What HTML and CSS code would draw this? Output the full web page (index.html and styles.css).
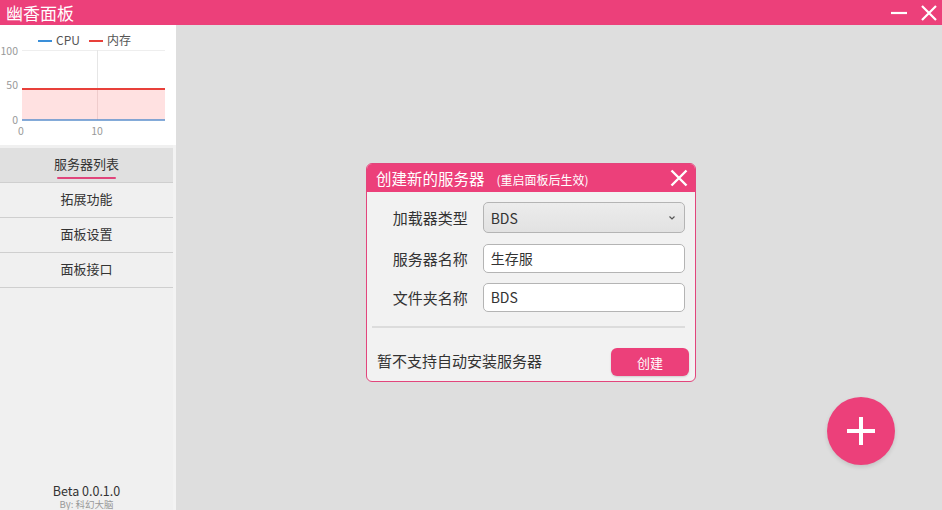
FILE: index.html
```html
<!DOCTYPE html>
<html lang="zh-CN">
<head>
<meta charset="utf-8">
<title>幽香面板</title>
<link rel="stylesheet" href="styles.css">
</head>
<body>
<div class="app">
  <header class="titlebar">
    <div class="app-title">幽香面板</div>
    <div class="win-controls">
      <svg class="win-btn" width="20" height="20" viewBox="0 0 20 20"><line x1="2" y1="10" x2="18" y2="10" stroke="#fff" stroke-width="2.2"/></svg>
      <svg class="win-btn" width="20" height="20" viewBox="0 0 20 20"><path d="M3 3 L17 17 M17 3 L3 17" stroke="#fff" stroke-width="2.2"/></svg>
    </div>
  </header>
  <div class="body-row">
    <aside class="sidebar">
      <div class="chart">
        <svg width="176" height="120" viewBox="0 0 176 120">
          <g font-family="Noto Sans CJK SC, sans-serif" font-size="12">
            <line x1="38" y1="16" x2="52" y2="16" stroke="#3a8fd9" stroke-width="2"/>
            <text x="56" y="20" fill="#555">CPU</text>
            <line x1="89" y1="16" x2="103" y2="16" stroke="#e8403a" stroke-width="2"/>
            <text x="107" y="20" fill="#555">内存</text>
          </g>
          <line x1="22" y1="25.5" x2="165" y2="25.5" stroke="#eee" stroke-width="1"/>
          <line x1="97.5" y1="25" x2="97.5" y2="95" stroke="#e6e6e6" stroke-width="1"/>
          <rect x="22" y="64" width="143" height="31" fill="#ffe1e1"/>
          <line x1="97.5" y1="64" x2="97.5" y2="95" stroke="#efcccc" stroke-width="1"/>
          <line x1="22" y1="64" x2="165" y2="64" stroke="#e8403a" stroke-width="2"/>
          <line x1="22" y1="95" x2="165" y2="95" stroke="#5b8fcc" stroke-width="1.3"/>
          <g font-family="Noto Sans CJK SC, sans-serif" font-size="10.5" fill="#999">
            <text x="18" y="30" text-anchor="end">100</text>
            <text x="18" y="64" text-anchor="end">50</text>
            <text x="18" y="99" text-anchor="end">0</text>
            <text x="21" y="110" text-anchor="middle">0</text>
            <text x="97" y="110" text-anchor="middle">10</text>
          </g>
        </svg>
      </div>
      <nav class="nav">
        <div class="nav-item active"><span class="nav-label">服务器列表</span></div>
        <div class="nav-item"><span class="nav-label">拓展功能</span></div>
        <div class="nav-item"><span class="nav-label">面板设置</span></div>
        <div class="nav-item"><span class="nav-label">面板接口</span></div>
      </nav>
      <div class="version">
        <div class="ver">Beta 0.0.1.0</div>
        <div class="by">By: 科幻大脑</div>
      </div>
    </aside>
    <main class="main">
      <section class="dialog">
        <div class="dialog-head">
          <span class="dialog-title">创建新的服务器</span>
          <span class="dialog-sub">(重启面板后生效)</span>
          <svg class="dialog-close" width="20" height="20" viewBox="0 0 20 20"><path d="M2.5 2.5 L17.5 17.5 M17.5 2.5 L2.5 17.5" stroke="#fff" stroke-width="2.4"/></svg>
        </div>
        <div class="dialog-body">
          <div class="form-row first">
            <label class="form-label">加载器类型</label>
            <div class="select">
              <span>BDS</span>
              <svg width="8" height="6" viewBox="0 0 8 6"><path d="M1.5 1.5 L4 4 L6.5 1.5" fill="none" stroke="#555" stroke-width="1.2"/></svg>
            </div>
          </div>
          <div class="form-row">
            <label class="form-label">服务器名称</label>
            <div class="input">生存服</div>
          </div>
          <div class="form-row">
            <label class="form-label">文件夹名称</label>
            <div class="input">BDS</div>
          </div>
          <div class="divider"></div>
          <div class="dialog-foot">
            <span class="note">暂不支持自动安装服务器</span>
            <button class="btn">创建</button>
          </div>
        </div>
      </section>
      <button class="fab">
        <svg width="34" height="34" viewBox="0 0 34 34"><path d="M17 3 V31 M3 17 H31" stroke="#fff" stroke-width="4"/></svg>
      </button>
    </main>
  </div>
</div>
</body>
</html>
```

FILE: styles.css
```css
* { box-sizing: border-box; }
html, body { margin: 0; padding: 0; }
body {
  width: 942px;
  height: 510px;
  overflow: hidden;
  font-family: "Noto Sans CJK SC", "Noto Sans", sans-serif;
  color: #333;
  background: #dedede;
}
.app { display: flex; flex-direction: column; height: 510px; }
.titlebar {
  height: 25px;
  background: #ec407a;
  display: flex;
  align-items: center;
  justify-content: space-between;
  padding: 0 3px 0 6px;
  flex: none;
}
.app-title { color: #fff; font-size: 17px; line-height: 25px; }
.win-controls { display: flex; gap: 10px; align-items: center; }
.win-btn { display: block; }
.body-row { flex: 1; display: flex; min-height: 0; }
.sidebar {
  width: 176px;
  background: #f0f0f0;
  display: flex;
  flex-direction: column;
  border-right: 3px solid #f3f3f3;
  position: relative;
}
.chart { background: #fff; height: 120px; width: 176px; margin-right: -3px; }
.chart svg { display: block; }
.nav { margin-top: 3px; }
.nav-item {
  height: 35px;
  border-bottom: 1px solid #cfcfcf;
  display: flex;
  align-items: center;
  justify-content: center;
  font-size: 13px;
  color: #333;
  padding-bottom: 2px;
}
.nav-item.active { background: #e0e0e0; }
.nav-label { position: relative; line-height: 18px; }
.nav-item.active .nav-label::after {
  content: "";
  position: absolute;
  left: 3px;
  right: 3px;
  bottom: -6px;
  height: 2px;
  background: #e0457b;
  border-radius: 1px;
}
.version { margin-top: auto; text-align: center; padding-bottom: 0; }
.ver { font-size: 12.5px; color: #333; line-height: 14px; margin-bottom: 1px; }
.by { font-size: 9.5px; color: #999; line-height: 11px; }
.main { flex: 1; position: relative; padding: 138px 0 0 190px; }
.dialog {
  width: 330px;
  height: 219px;
  border: 1px solid #e2457c;
  border-radius: 6px;
  background: #f2f2f2;
  overflow: hidden;
}
.dialog-head {
  height: 28px;
  background: #ec407a;
  display: flex;
  align-items: center;
  padding: 0 6px 0 9px;
  color: #fff;
}
.dialog-title { font-size: 15.5px; }
.dialog-sub { font-size: 12px; margin-left: 12px; margin-top: 2px; }
.dialog-close { margin-left: auto; }
.dialog-body { padding: 10px 10px 0 5px; }
.form-row { display: flex; align-items: center; height: 30px; margin-bottom: 9px; }
.form-row.first { height: 31px; margin-bottom: 10px; }
.form-label { width: 96px; text-align: right; font-size: 15px; color: #333; padding-right: 0; }
.select, .input {
  margin-left: 15px;
  width: 203px;
  height: 30px;
  border: 1px solid #b4b4b4;
  border-radius: 5px;
  font-size: 14px;
  display: flex;
  align-items: center;
  padding: 0 8px 0 7px;
  color: #333;
}
.select { background: linear-gradient(#ececec, #e2e2e2); justify-content: space-between; height: 31px; }
.input { background: #fff; height: 29px; }
.divider { height: 2px; background: #dcdcdc; margin: 14px 0 0 0; }
.dialog-foot { display: flex; align-items: center; justify-content: space-between; padding: 20px 0 0 5px; }
.note { font-size: 15px; color: #333; line-height: 20px; margin-top: -2px; }
.btn {
  width: 78px;
  height: 28px;
  border: none;
  border-radius: 6px;
  background: #ec407a;
  color: #fff;
  font-family: "Noto Sans CJK SC", sans-serif;
  font-size: 13px;
  margin-right: -4px;
  box-shadow: 0 1px 2px rgba(0,0,0,0.15);
}
.fab {
  position: absolute;
  right: 47px;
  bottom: 45px;
  width: 68px;
  height: 68px;
  border-radius: 50%;
  border: none;
  background: #ec407a;
  display: flex;
  align-items: center;
  justify-content: center;
  box-shadow: 0 2px 4px rgba(0,0,0,0.12);
  padding: 0;
}
.fab svg { display: block; }
```
